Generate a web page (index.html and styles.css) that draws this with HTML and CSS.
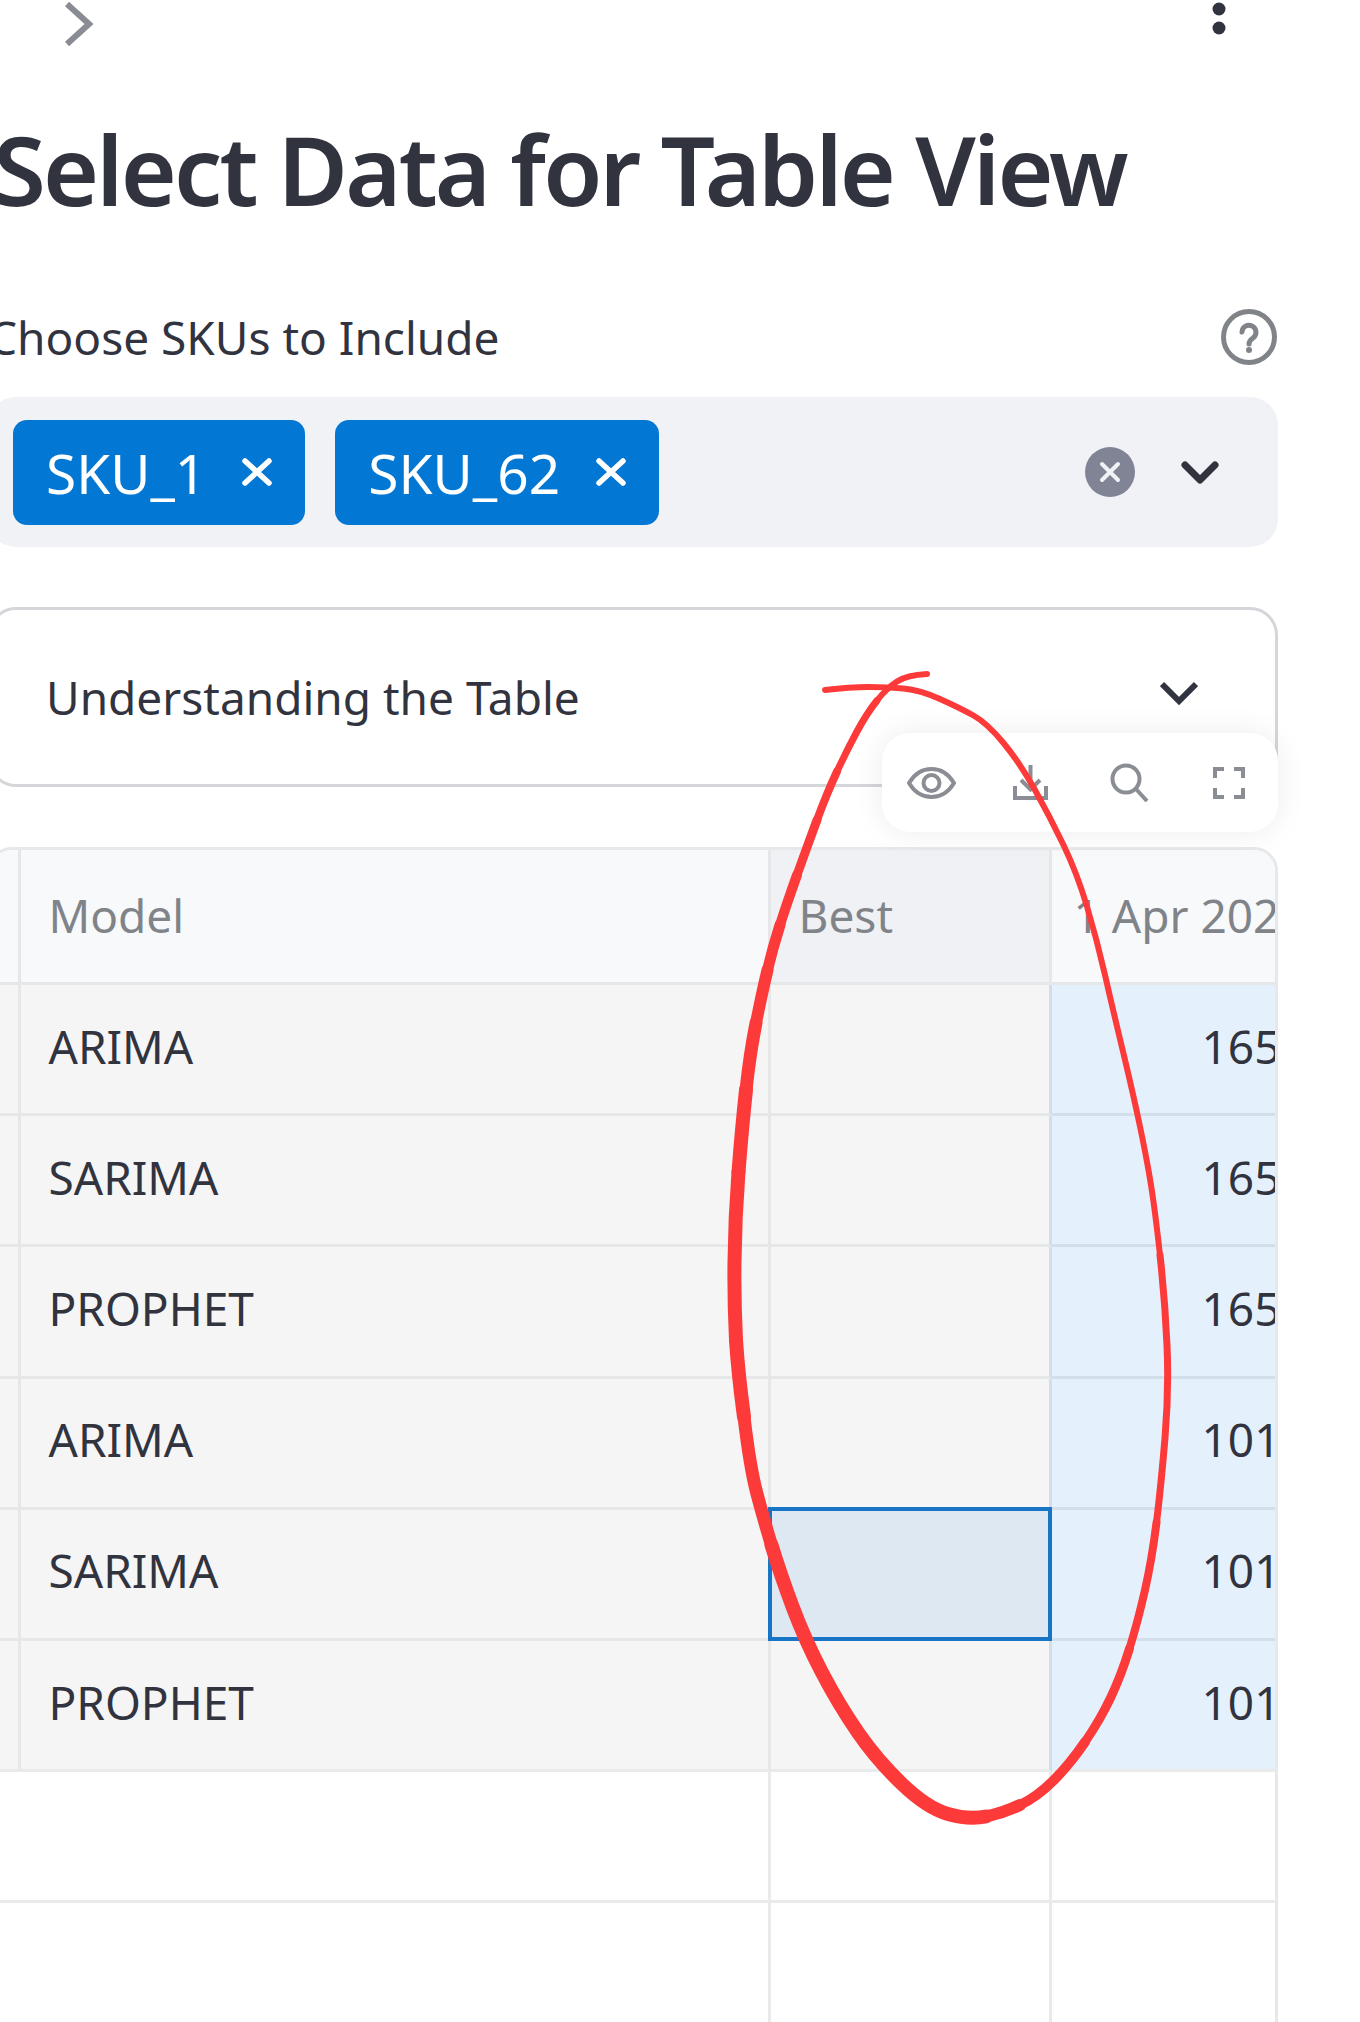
FILE: index.html
```html
<!DOCTYPE html>
<html lang="en">
<head>
    <meta charset="UTF-8">
    <meta name="viewport" content="width=device-width, initial-scale=1.0">
    <title>Select Data for Table View</title>
    <link rel="stylesheet" href="styles.css">
</head>
<body>
    <div class="page">
        <div class="topbar">
            <svg class="icon-open" width="28" height="44" viewBox="0 0 28 44"><path d="M2 2l22 20L2 42"/></svg>
            <svg class="icon-menu" width="14" height="36" viewBox="0 0 14 36"><circle cx="7" cy="9" r="6.5"/><circle cx="7" cy="28" r="6.5"/></svg>
        </div>

        <h1>Select Data for Table View</h1>

        <div class="label-row">
            <label>Choose SKUs to Include</label>
            <svg class="icon-help" width="56" height="56" viewBox="0 0 56 56">
                <circle cx="28" cy="28" r="25.5"/>
                <path d="M21 23a7 7 0 1 1 11 6c-3 2-4 3-4 6"/>
                <circle class="dot" cx="28" cy="41" r="3"/>
            </svg>
        </div>

        <div class="multiselect">
            <span class="tag">SKU_1
                <svg width="30" height="30" viewBox="0 0 30 30"><path d="M3 4l24 22M27 4L3 26"/></svg>
            </span>
            <span class="tag">SKU_62
                <svg width="30" height="30" viewBox="0 0 30 30"><path d="M3 4l24 22M27 4L3 26"/></svg>
            </span>
            <div class="controls">
                <svg class="icon-clear" width="50" height="50" viewBox="0 0 50 50"><circle cx="25" cy="25" r="25"/><path d="M17 17l16 16M33 17L17 33"/></svg>
                <svg class="icon-down" width="38" height="24" viewBox="0 0 38 24"><path d="M4 5l15 15L34 5"/></svg>
            </div>
        </div>

        <div class="expander">
            <span>Understanding the Table</span>
            <svg class="icon-caret" width="38" height="24" viewBox="0 0 38 24"><path d="M2 3l17 17L36 3"/></svg>
        </div>

        <div class="table-wrap">
            <div class="toolbar">
                <button><svg width="49" height="32" viewBox="0 0 49 32"><path d="M2 16C8 6 16 2 24.5 2S41 6 47 16C41 26 33 30 24.5 30S8 26 2 16Z"/><circle cx="24.5" cy="16" r="8"/></svg></button>
                <button><svg width="35" height="35" viewBox="0 0 35 35"><path d="M17.5 0v24M8 15l9.5 9.5L27 15M2 21v12h31V21"/></svg></button>
                <button><svg width="39" height="39" viewBox="0 0 39 39"><circle cx="16" cy="16" r="13.5"/><path d="M25.5 25.5L37 38"/></svg></button>
                <button><svg width="32" height="32" viewBox="0 0 32 32"><path d="M2 11V2h9M21 2h9v9M30 21v9h-9M11 30H2v-9"/></svg></button>
            </div>

            <div class="table">
                <div class="table-inner">
                    <div class="th"></div><div class="th">Model</div><div class="th th-active">Best</div><div class="th th-date">1 Apr 2024</div>

                    <div class="td"></div><div class="td">ARIMA</div><div class="td td-best"></div><div class="td td-num">165</div>
                    <div class="td"></div><div class="td">SARIMA</div><div class="td td-best"></div><div class="td td-num">165</div>
                    <div class="td"></div><div class="td">PROPHET</div><div class="td td-best"></div><div class="td td-num">165</div>
                    <div class="td"></div><div class="td">ARIMA</div><div class="td td-best"></div><div class="td td-num">101</div>
                    <div class="td"></div><div class="td">SARIMA</div><div class="td td-best selected"></div><div class="td td-num">101</div>
                    <div class="td last"></div><div class="td last">PROPHET</div><div class="td td-best last"></div><div class="td td-num last">101</div>

                    <div class="empty"></div><div class="empty"></div><div class="empty"></div><div class="empty"></div>
                    <div class="empty"></div><div class="empty"></div><div class="empty"></div><div class="empty"></div>
                    <div class="empty"></div><div class="empty"></div><div class="empty"></div><div class="empty"></div>
                </div>
            </div>
        </div>
    </div>

    <!-- hand drawn circle on top of the screenshot -->
    <svg class="ink" width="1360" height="2022" viewBox="0 0 1360 2022">
        <path stroke-width="6" d="M927 674Q907 675 897 681.5Q887 688 877 700.5"/>
        <path stroke-width="7" d="M877 700.5Q867 713 857 731.5Q847 750 837 771.5"/>
        <path stroke-width="8" d="M837 771.5Q827 793 817 820"/>
        <path stroke-width="9" d="M817 820Q807 847 797 875"/>
        <path stroke-width="10" d="M797 875Q787 903 780 925"/>
        <path stroke-width="11" d="M780 925Q773 947 767.5 970"/>
        <path stroke-width="12" d="M767.5 970Q762 993 756 1023"/>
        <path stroke-width="13" d="M756 1023Q750 1053 746 1090"/>
        <path stroke-width="14" d="M746 1090Q742 1127 738.5 1172"/>
        <path stroke-width="14" d="M738.5 1172Q735 1217 734.5 1262Q734 1300 736 1340"/>
        <path stroke-width="14" d="M736 1340Q738 1372 744 1417"/>
        <path stroke-width="13" d="M744 1417Q750 1467 756.5 1492Q763 1517 771.5 1545"/>
        <path stroke-width="14" d="M771.5 1545Q780 1573 792.5 1606.5Q805 1640 822 1672.5Q839 1705 858 1732.5Q877 1760 902 1784Q927 1808 948 1814Q969 1820 986 1816.5"/>
        <path stroke-width="12" d="M986 1816.5Q1003 1813 1020 1805"/>
        <path stroke-width="10" d="M1020 1805Q1037 1797 1053.5 1780.5Q1070 1764 1085 1742"/>
        <path stroke-width="9" d="M1085 1742Q1100 1720 1110.5 1698Q1121 1676 1129.5 1648.5"/>
        <path stroke-width="8" d="M1129.5 1648.5Q1138 1621 1145 1590Q1152 1559 1156.5 1522.5"/>
        <path stroke-width="7" d="M1156.5 1522.5Q1161 1486 1165 1438Q1169 1390 1167 1345Q1165 1300 1160 1255"/>
        <path stroke-width="6" d="M1160 1255Q1155 1210 1151 1185Q1147 1160 1140 1126.5Q1133 1093 1123 1051.5Q1113 1010 1105 975Q1097 940 1087 906.5Q1077 873 1063.5 845Q1050 817 1035 790Q1020 763 1003.5 743Q987 723 973.5 715.5Q960 708 940 699Q920 690 903.5 688.5Q887 687 868.5 687Q850 687 825 690"/>
    </svg>
</body>
</html>
```

FILE: styles.css
```css
html, body {
    margin: 0;
    padding: 0;
    height: 2022px;
    overflow: hidden;
    background-color: white;
}

body {
    position: relative;
    font-family: "Noto Sans", Arial, sans-serif;
    font-size: 46px;
    color: #31333f;
}

.page {
    width: 1290px;
    margin-left: -12px;
}

svg {
    display: block;
    flex: none;
    fill: none;
}

.topbar {
    display: flex;
    justify-content: space-between;
    align-items: flex-start;
    height: 48px;
    padding: 0 52px 0 77px;
}

.icon-open {
    margin-top: 2px;
    stroke: #8a8c93;
    stroke-width: 6;
}

.icon-menu {
    fill: #31333f;
}

h1 {
    margin: 61px 0 0 5px;
    font-size: 96px;
    line-height: 120px;
    font-weight: 600;
    letter-spacing: -2.8px;
    white-space: nowrap;
}

.label-row {
    display: flex;
    justify-content: space-between;
    align-items: center;
    height: 60px;
    margin-top: 78px;
    padding-right: 1px;
}

.icon-help {
    stroke: #808488;
    stroke-width: 5;
    stroke-linecap: round;
}

.icon-help .dot {
    fill: #808488;
    stroke: none;
}

.multiselect {
    display: flex;
    align-items: center;
    gap: 30px;
    height: 150px;
    margin-top: 30px;
    padding-left: 25px;
    background-color: #f0f2f6;
    border-radius: 28px;
}

.tag {
    display: flex;
    align-items: center;
    gap: 36px;
    height: 105px;
    padding: 0 33px;
    background-color: #0277d4;
    border-radius: 14px;
    color: white;
    font-size: 55px;
}

.tag svg {
    stroke: white;
    stroke-width: 5.5;
    stroke-linecap: round;
}

.controls {
    display: flex;
    align-items: center;
    gap: 46px;
    margin-left: auto;
    padding-right: 59px;
}

.icon-clear circle {
    fill: #808495;
}

.icon-clear path {
    stroke: #f0f2f6;
    stroke-width: 4;
    stroke-linecap: round;
}

.icon-down {
    stroke: #31333f;
    stroke-width: 7;
    stroke-linecap: round;
    stroke-linejoin: round;
}

.expander {
    box-sizing: border-box;
    display: flex;
    justify-content: space-between;
    align-items: center;
    height: 180px;
    margin-top: 60px;
    padding: 0 77px 0 55px;
    border: 3px solid #d5d6da;
    border-radius: 28px;
}

.icon-caret {
    margin-top: -8px;
    stroke: #31333f;
    stroke-width: 6;
}

.table-wrap {
    position: relative;
    margin-top: 60px;
}

.toolbar {
    position: absolute;
    top: -114px;
    right: 0;
    z-index: 2;
    display: flex;
    height: 99px;
    background-color: white;
    border-radius: 28px;
    box-shadow: 0 0 30px rgba(0, 0, 0, 0.08);
}

.toolbar button {
    display: flex;
    justify-content: center;
    align-items: center;
    width: 99px;
    padding: 0;
    border: none;
    background: none;
}

.toolbar svg {
    stroke: #8a8d93;
    stroke-width: 4;
}

.table {
    box-sizing: border-box;
    height: 1300px;
    border: 3px solid #e7e8ea;
    border-radius: 24px;
    overflow: hidden;
}

.table-inner {
    display: grid;
    grid-template-columns: 29.5px 750px 281px 232px;
    grid-auto-rows: 131.2px;
    grid-template-rows: 135px;
}

.th, .td, .empty {
    box-sizing: border-box;
    display: flex;
    align-items: center;
    padding: 0 28px;
    border-right: 3px solid #e6e7e9;
    border-bottom: 3px solid #e6e7e9;
    white-space: nowrap;
    overflow: hidden;
}

.th {
    padding-bottom: 3px;
    background-color: #f8f9fb;
    color: #808489;
}

.th:empty, .td:empty {
    padding: 0;
}

.th-active {
    background-color: #f0f1f5;
}

.th-date {
    padding-left: 22px;
}

.td {
    padding-bottom: 7px;
    background-color: #f5f5f6;
}

.td-best {
    border-right-color: #d0deec;
}

.td-num {
    justify-content: flex-end;
    padding: 0 0 7px 0;
    background-color: #e4f1fc;
    border-bottom-color: #d2dfeb;
}

.td.last {
    border-bottom-color: #e9eaec;
}

.empty {
    background-color: white;
    border-color: #e9eaec;
}

.selected {
    position: relative;
    margin: -3px 0 0 -3px;
    background-color: #dde8f2;
    border: 4px solid #1874c4;
}

.ink {
    position: absolute;
    top: 0;
    left: 0;
    z-index: 5;
    pointer-events: none;
}

.ink path {
    fill: none;
    stroke: #fd3a3a;
    stroke-linecap: round;
}
```
